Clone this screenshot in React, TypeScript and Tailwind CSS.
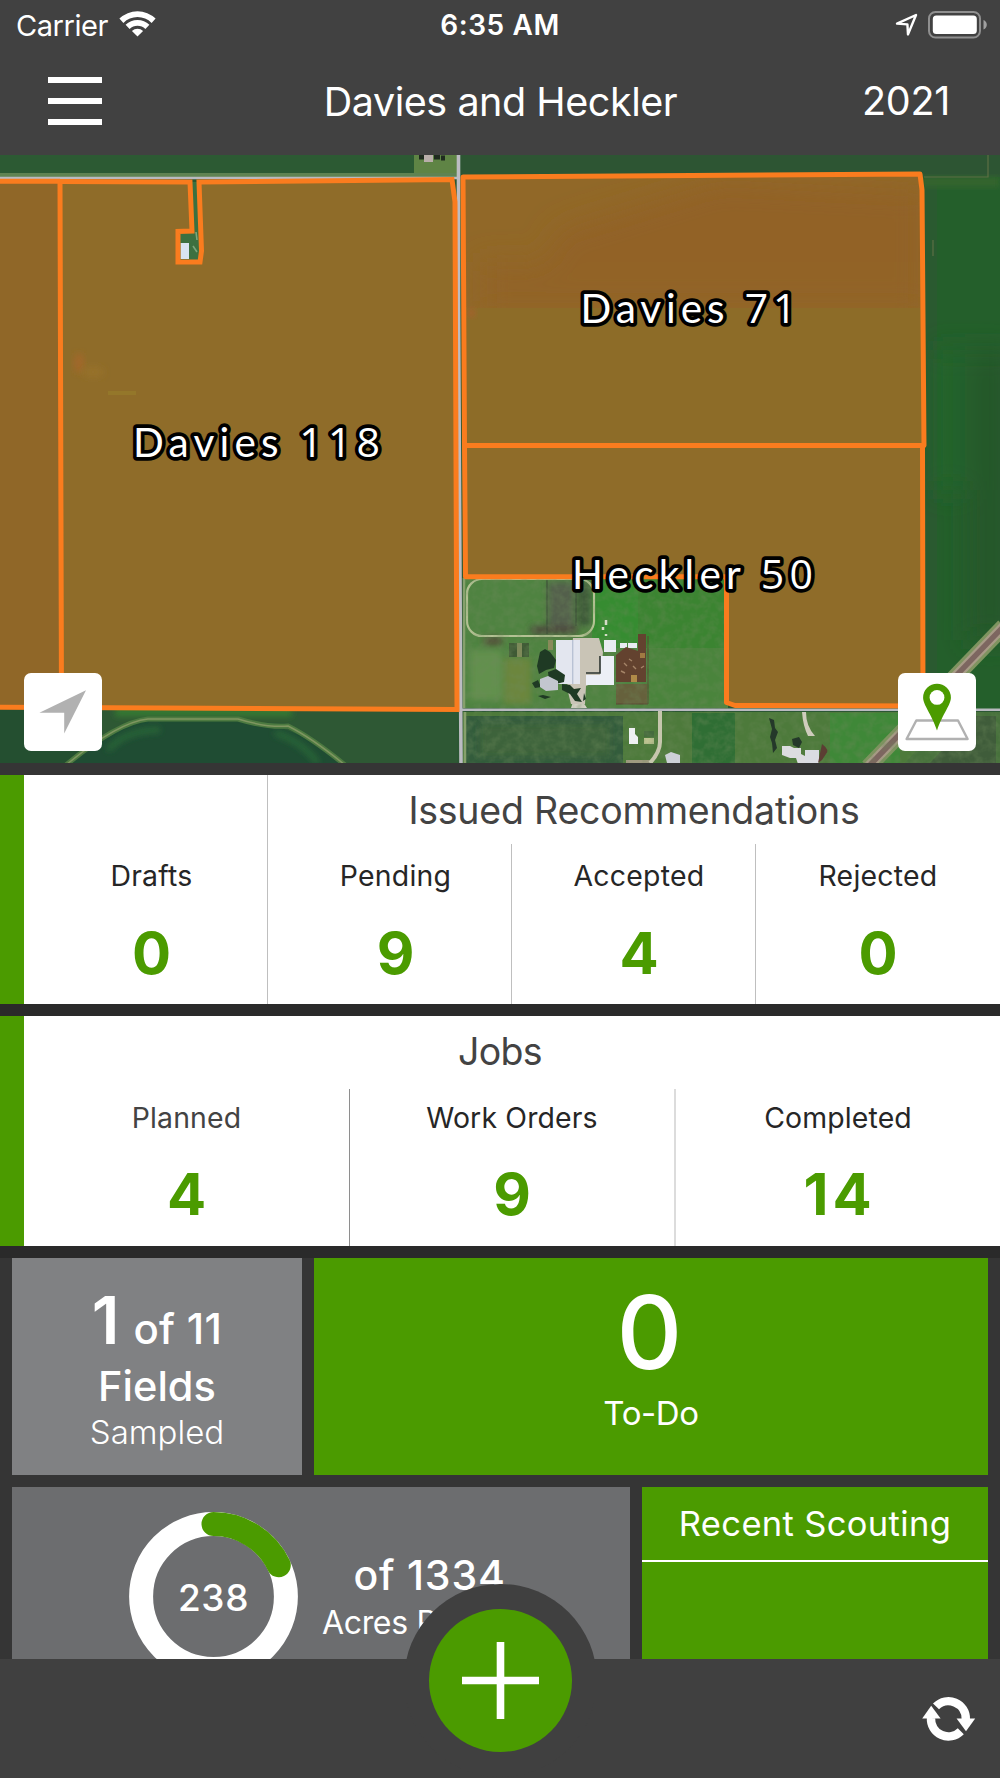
type StatProps = {
  label: string;
  value: number;
};

function Wifi() {
  return (
    <svg width="37" height="28" viewBox="0 0 37 28" fill="#fff">
      <path d="M0.4 9.6A26 26 0 0 1 36.6 9.6L32.6 13.9A20 20 0 0 0 4.4 13.9Z" />
      <path d="M6.6 15.8A17.2 17.2 0 0 1 30.4 15.8L26.4 19.9A11.5 11.5 0 0 0 10.6 19.9Z" />
      <path d="M12.9 22A8.2 8.2 0 0 1 24.1 22L18.5 27.4Z" />
    </svg>
  );
}

function StatusBar() {
  return (
    <div className="grid h-[51px] grid-cols-3 items-center pl-4 pr-[13px]">
      <div className="flex items-center gap-[11px]">
        <span className="text-[29px] tracking-[-0.44px] leading-[51px]">
          Carrier
        </span>
        <div className="pb-[5px]">
          <Wifi />
        </div>
      </div>
      <p className="text-center text-[28px] font-semibold tracking-[0.6px] leading-[51px] pr-[3px]">
        6:35 AM
      </p>
      <div className="flex items-center justify-end gap-[9px] pb-[2px]">
        <svg width="24" height="24" viewBox="0 0 24 24">
          <path
            d="M2 10.6 L21 2 L13 21.4 L12.4 11.4 Z"
            fill="none"
            stroke="#fff"
            strokeWidth="2.4"
            strokeLinejoin="round"
          />
        </svg>
        <svg width="59" height="28" viewBox="0 0 59 28">
          <rect x="1" y="1" width="51" height="25.5" rx="6.5" fill="none" stroke="#8f8f8f" strokeWidth="2" />
          <rect x="4.8" y="4.6" width="44" height="18.4" rx="3.5" fill="#fff" />
          <path d="M55.5 9 Q58.8 10.5 58.8 13.8 Q58.8 17 55.5 18.6 Z" fill="#a0a0a0" />
        </svg>
      </div>
    </div>
  );
}

function Header() {
  return (
    <header className="h-[155px] shrink-0 bg-[#414141] text-white">
      <StatusBar />
      <div className="grid h-[100px] grid-cols-[1fr_auto_1fr] items-center pl-12 pr-[50px]">
        <button className="flex w-[54px] flex-col gap-[14.5px]">
          <span className="h-[6.5px] bg-white" />
          <span className="h-[6.5px] bg-white" />
          <span className="h-[6.5px] bg-white" />
        </button>
        <h1 className="pt-1 pl-[3px] text-[39.5px] tracking-[-0.46px]">
          Davies and Heckler
        </h1>
        <p className="pt-[2px] text-right text-[39.5px] tracking-[-0.3px]">2021</p>
      </div>
    </header>
  );
}

function FieldLabel({
  x,
  y,
  width,
  name,
  acres,
}: {
  x: number;
  y: number;
  width: number;
  name: string;
  acres: string;
}) {
  return (
    <text
      x={x}
      y={y}
      textLength={width}
      fontSize="40.5"
      fontFamily="Lato, sans-serif"
      fill="#fff"
      stroke="#000"
      strokeWidth="7.5"
      strokeLinejoin="round"
      paintOrder="stroke"
      xmlSpace="preserve"
    >
      {name}{" "}
      <tspan fontFamily="'Open Sans', sans-serif" fontSize="41">
        {acres}
      </tspan>
    </text>
  );
}

function Satellite() {
  return (
    <g>
      <rect x="0" y="155" width="1000" height="608" fill="#2b5733" />

      {/* strip north of the road */}
      <rect x="0" y="155" width="458" height="20" fill="#2c5a33" />
      <rect x="414" y="155" width="43" height="20" fill="#5f8445" />
      <rect x="424" y="155" width="9" height="7" fill="#b9aeaa" />
      <path d="M419 157h5M434 157h6M441 158h4" stroke="#1f2b1f" strokeWidth="5" />
      <rect x="0" y="173" width="458" height="4" fill="#5f8352" />
      <rect x="461" y="155" width="539" height="20" fill="#2d5533" />

      {/* east field */}
      <rect x="920" y="177" width="80" height="533" fill="#245f2b" />
      <rect x="920" y="177" width="17" height="533" fill="#2a5a30" />
      <g filter="url(#haze)">
        <rect x="937" y="350" width="26" height="140" fill="#226529" />
        <rect x="970" y="350" width="40" height="290" fill="#265629" />
      </g>
      <rect x="920" y="177" width="80" height="10" fill="#35652f" filter="url(#soft)" />
      <path d="M924 177H988V155M933 240V256" fill="none" stroke="#5d6f44" strokeWidth="1.2" />

      {/* farmyard */}
      <rect x="463" y="577" width="265" height="131" fill="#4f8341" />
      <rect x="592" y="578" width="46" height="70" fill="#368c31" />
      <rect x="638" y="578" width="90" height="70" fill="#3b8431" />
      <rect x="647" y="648" width="81" height="58" fill="#4a843c" />
      <g filter="url(#soft)">
        <rect x="548" y="582" width="26" height="44" fill="#525f4b" />
        <rect x="577" y="582" width="14" height="44" fill="#3d5a38" />
        <rect x="531" y="626" width="46" height="8" fill="#4d4a3c" />
        <rect x="484" y="637" width="18" height="8" fill="#534b39" />
        <rect x="504" y="658" width="27" height="46" fill="#6c863e" />
        <rect x="470" y="650" width="32" height="50" fill="#62904d" />
      </g>
      <rect x="467" y="579" width="127" height="57" rx="15" fill="none" stroke="#b4c294" strokeWidth="2.2" />
      <path d="M547 580V634M576 580V626" stroke="#3a4a36" strokeWidth="1" />
      <rect x="509" y="643" width="20" height="14" fill="#3f5a35" />
      <rect x="517" y="643" width="5" height="14" fill="#7f8a5a" />
      <rect x="548" y="640" width="5" height="10" fill="#8a8a5a" />
      <rect x="616" y="684" width="31" height="20" fill="#66613c" />
      <path d="M648 636V704H616" fill="none" stroke="#5a4632" strokeWidth="1" />
      <path d="M571 708l2 -6h10l4 6z" fill="#d6d3c7" />

      {/* south of the road */}
      <rect x="463" y="712" width="537" height="51" fill="#4d7a3b" />
      <rect x="466" y="716" width="157" height="47" fill="#335c3c" />
      <rect x="480" y="724" width="130" height="32" fill="#3d633a" filter="url(#soft)" />
      <rect x="692" y="713" width="43" height="50" fill="#2f6e34" />
      <rect x="830" y="713" width="70" height="50" fill="#3f8838" />
      <rect x="644" y="731" width="10" height="6" fill="#456b3d" />
      <rect x="644" y="738" width="10" height="6" fill="#c3c795" />
      <rect x="626" y="760" width="24" height="3" fill="#a09a80" />

      {/* railway */}
      <path d="M868 767L1004 626" stroke="#7f9460" strokeWidth="16" />
      <path d="M868 767L1004 626" stroke="#a79b86" strokeWidth="10" />
      <path d="M868 767L1004 626" stroke="#7d6660" strokeWidth="5.5" />
      <path d="M905 763L952 712H1000V763Z" fill="#47713c" />
      <path d="M930 763L975 716H996V763Z" fill="#3f5c3a" />

      {/* creek in the south west */}
      <rect x="0" y="709" width="457" height="54" fill="#2e5834" />
      <rect x="0" y="709" width="90" height="54" fill="#244f30" />
      <path d="M70 763Q115 722 150 720H240Q290 722 345 763Z" fill="#1f4c33" />
      <g fill="none" filter="url(#soft)">
        <path d="M115 712H292" stroke="#367a32" strokeWidth="9" />
        <path d="M108 750Q125 730 160 730M275 733Q300 740 318 763" stroke="#2a6a38" strokeWidth="5" />
      </g>
      <path
        d="M66 765Q118 722 148 719H238Q268 728 288 726Q312 738 345 765"
        fill="none"
        stroke="#4d7a41"
        strokeWidth="5"
      />
      <path
        d="M66 765Q118 722 148 719H238Q268 728 288 726Q312 738 345 765"
        fill="none"
        stroke="#7f9660"
        strokeWidth="1.5"
      />
    </g>
  );
}

function Farmstead() {
  return (
    <g>
      <path d="M579 638h20l4 14 -3 28 -14 6 -1 18h-14l-4 -16 6 -50z" fill="#c9c4b6" />
      <rect x="556" y="640" width="24" height="44" fill="#e3e6ef" />
      <rect x="572" y="640" width="1.4" height="44" fill="#b9c2d4" />
      <path d="M600 656h14v29h-28v-10h14z" fill="#eceff6" />
      <path d="M600 656v17h-14" fill="none" stroke="#2c3430" strokeWidth="1.6" />
      <rect x="604" y="640" width="12" height="12" fill="#e8ecf2" />
      <rect x="620" y="643" width="7" height="5" fill="#e8ecf2" />
      <rect x="628" y="643" width="9" height="5" fill="#e8ecf2" />
      <path d="M616 655l10 -8 12 4V634h8v48h-30z" fill="#63422f" />
      <rect x="631" y="675" width="6" height="7" fill="#b08a48" />
      <rect x="640" y="653" width="5" height="5" fill="#a07a42" />
      <path
        d="M624 663l3 3M629 659l3 2M621 671l4 2M633 666l3 3M641 668l3 -2"
        stroke="#a58468"
        strokeWidth="1.4"
      />
      <g fill="#1f3a24">
        <path d="M540 652l5 -3 5 3 6 8 -2 8 -8 2 -7 4 -2 -8z" />
        <path d="M548 672l8 -3 9 6 -1 7 -8 2 -7 -3z" />
        <path d="M532 683l6 -3 3 7 -6 1zM562 684l8 1 4 4 7 -1 -4 6 5 8 -7 -1 -5 -7 -8 -4z" />
        <path d="M538 696l5 -1 8 2 -6 2zM584 693l2 6 -3 2z" />
      </g>
      <path d="M540 679l8 -3 10 5v9l-12 1 -6 -4z" fill="#c3c6cf" />
      <path d="M606 620v5M603 627v3M606 634v2" stroke="#d5dcc8" strokeWidth="2.5" />

      <path d="M660 711V742Q660 752 650 763" fill="none" stroke="#c6c6ad" strokeWidth="4" />
      <path d="M629 728h6v6l3 3v7h-9z" fill="#eef0f2" />
      <path d="M665 755l6 -3 9 3v8h-13z" fill="#ccd0d6" />
      <path d="M802 712q1 14 6 24h7q-9 -10 -9 -24z" fill="#cfccbc" />
      <path d="M782 746h8l4 2h7v6l4 2v8h-7l-2 -6h-6l-8 -3z" fill="#dcdce0" />
      <rect x="805" y="750" width="14" height="15" fill="#dadce2" />
      <path d="M822 744q8 6 4 10l-4 6 -4 3z" fill="#5c3d33" />
      <path
        d="M769 718l5 2 1 8 3 4 -3 8 2 8 -4 5 -1 -10 -2 -6 2 -8zM792 739l7 -2 3 5 -3 6 -6 -3z"
        fill="#24382a"
      />
    </g>
  );
}

function FieldMap() {
  return (
    <section className="relative h-[608px] shrink-0">
      <svg width="1000" height="608" viewBox="0 155 1000 608" className="block">
        <defs>
          <filter id="soft" x="-30%" y="-30%" width="160%" height="160%">
            <feGaussianBlur stdDeviation="3" />
          </filter>
          <filter id="haze" x="-50%" y="-50%" width="200%" height="200%">
            <feGaussianBlur stdDeviation="14" />
          </filter>
          <filter id="grain" x="0" y="0" width="100%" height="100%">
            <feTurbulence type="fractalNoise" baseFrequency="0.12" numOctaves="3" seed="4" />
            <feColorMatrix values="0 0 0 0 0.15  0 0 0 0 0.25  0 0 0 0 0.1  0 0.8 0 0 -0.3" />
          </filter>
          <clipPath id="davies71">
            <path d="M463 177L920 174L924 445H464Z" />
          </clipPath>
          <clipPath id="east">
            <rect x="920" y="177" width="80" height="533" />
          </clipPath>
        </defs>

        <Satellite />
        <rect x="463" y="577" width="265" height="186" filter="url(#grain)" />
        <rect x="728" y="712" width="272" height="51" filter="url(#grain)" />
        <Farmstead />

        {/* roads */}
        <path d="M0 178H458M461 709.7H1000" stroke="#b9bac0" strokeWidth="2.6" />
        <path d="M465 712V763M464 578V708" stroke="#86a06c" strokeWidth="2.5" />
        <path d="M458.5 155V300L461 763" fill="none" stroke="#bcbcc2" strokeWidth="3.6" />

        {/* field fills */}
        <path d="M0 181H60L61.5 707.5H0Z" fill="#906728" />
        <path
          d="M60 181.5L190 182L192 231L178 231.5V262H200L201.5 251L199 182L452 179.5L455 202L457 709.5L61.5 707.5Z"
          fill="#8f6c29"
        />
        <path d="M463 177L920 174L924 445H464Z" fill="#8d6c28" />
        <g clipPath="url(#davies71)">
          <rect x="460" y="170" width="470" height="138" fill="#916828" />
          <g filter="url(#haze)">
            <path d="M560 230L720 180L925 190V310H520Z" fill="#926228" />
            <path d="M480 262H920V310H480Z" fill="#926428" />
          </g>
          <rect x="460" y="308" width="470" height="140" fill="#8d6c28" />
          <circle cx="471" cy="313" r="4" fill="#a7602e" filter="url(#soft)" />
        </g>
        <path d="M465 445H922.5V706H735L726.5 702V576.7H465.5Z" fill="#8f6c29" />
        <ellipse cx="79" cy="363" rx="5" ry="10" fill="#a2682b" filter="url(#soft)" />
        <ellipse cx="93" cy="372" rx="11" ry="6" fill="#96712a" filter="url(#soft)" />
        <path d="M108 393H136" stroke="#94772a" strokeWidth="4" />

        {/* farm site cut out of the Davies 118 field */}
        <path d="M192 182H199L201 251L200 262H180V233L193 231Z" fill="#3c7040" />
        <rect x="180.5" y="243" width="8.5" height="16" fill="#d8e4f2" />
        <path d="M196 232l1 8M193 246l4 6" stroke="#7ba67c" strokeWidth="1.6" />

        {/* field boundaries */}
        <g fill="none" stroke="#fa7c1e" strokeWidth="5" strokeLinejoin="round">
          <path d="M-5 181.3H60M60 181L61.5 707.5L-5 707.3" />
          <path
            d="M60 181.5L190 182L192 231L178 231.5V262H200L201.5 251L199 182L452 179.5L455 202L457 709.5L61.5 707.5"
            strokeLinejoin="miter"
          />
          <path d="M463 177L920 174L922 190L924 445.5H464.5Z" />
          <path d="M464.5 445.5H922.5L923 706L735 705.5L726.5 702.5V576.7H465.5Z" />
        </g>

        <FieldLabel x={580.5} y={322.5} width={216} name="Davies" acres="71" />
        <FieldLabel x={133} y={457} width={247} name="Davies" acres="118" />
        <FieldLabel x={572} y={588.5} width={241} name="Heckler" acres="50" />
      </svg>

      <button className="absolute bottom-3 left-6 size-[78px] rounded-[7px] bg-white">
        <svg width="78" height="78" viewBox="24 673 78 78">
          <path d="M86 690.3L39.4 712.8H64.2V733.6Z" fill="#b1b1b1" />
        </svg>
      </button>
      <button className="absolute bottom-3 right-6 size-[78px] rounded-[7px] bg-white">
        <svg width="78" height="78" viewBox="898 673 78 78">
          <path
            d="M916.3 720.5H958L967.6 739H906.6Z"
            fill="none"
            stroke="#b1b1b1"
            strokeWidth="2.4"
            strokeLinejoin="round"
          />
          <path
            d="M937 683.7A13.9 13.9 0 0 1 950.9 697.6C950.9 705 943 713 937 730.5C931 713 923.1 705 923.1 697.6A13.9 13.9 0 0 1 937 683.7Z"
            fill="#4b9b00"
          />
          <circle cx="937" cy="697.4" r="7.4" fill="#fff" />
        </svg>
      </button>
    </section>
  );
}

function StatValue({ value, className }: { value: number; className: string }) {
  return (
    <p className={`text-[58px] font-bold text-[#4b9b00] ${className}`}>
      {value}
    </p>
  );
}

function Recommendation({ label, value }: StatProps) {
  return (
    <div className="flex-1 text-center">
      <p className="h-[63px] text-[28.4px] leading-[63px] tracking-[0.25px] text-[#262626]">
        {label}
      </p>
      <StatValue value={value} className="leading-[93px]" />
    </div>
  );
}

function Job({ label, value, muted }: StatProps & { muted?: boolean }) {
  return (
    <div className="flex-1 text-center">
      <p
        className={`h-[56px] text-[28.4px] leading-[57px] tracking-[0.15px] ${
          muted ? "text-[#434343]" : "text-[#262626]"
        }`}
      >
        {label}
      </p>
      <StatValue
        value={value}
        className={value > 9 ? "pl-[3px] leading-[99px] tracking-[4px]" : "leading-[99px]"}
      />
    </div>
  );
}

function Recommendations() {
  return (
    <section className="mt-3 flex h-[229px] shrink-0 border-l-[24px] border-[#4b9b00] bg-white">
      <div className="flex w-[244px] border-r border-[#bfbfbf] pt-[69px] pl-3">
        <Recommendation label="Drafts" value={0} />
      </div>
      <div className="flex-1">
        <h2 className="h-[69px] text-center text-[37.5px] leading-[71px] tracking-[-0.22px] text-[#434343]">
          Issued Recommendations
        </h2>
        <div className="flex h-[160px]">
          <div className="flex w-[244px] border-r border-[#bfbfbf] pl-3">
            <Recommendation label="Pending" value={9} />
          </div>
          <div className="flex w-[244px] border-r border-[#bfbfbf] pl-[11px]">
            <Recommendation label="Accepted" value={4} />
          </div>
          <Recommendation label="Rejected" value={0} />
        </div>
      </div>
    </section>
  );
}

function Jobs() {
  return (
    <section className="h-[230px] shrink-0 border-l-[24px] border-[#4b9b00] bg-white">
      <h2 className="h-[73px] pr-6 text-center text-[37.5px] leading-[72px] tracking-[-0.7px] text-[#434343]">
        Jobs
      </h2>
      <div className="flex h-[157px]">
        <div className="flex w-[326px] border-r border-[#8e8e8e]">
          <Job label="Planned" value={4} muted />
        </div>
        <div className="flex w-[326px] border-r-2 border-[#dcdcdc]">
          <Job label="Work Orders" value={9} />
        </div>
        <Job label="Completed" value={14} />
      </div>
    </section>
  );
}

function AcresRing({ done, total }: { done: number; total: number }) {
  const circumference = 2 * Math.PI * 72.4;

  return (
    <div className="relative mt-[25px] size-[169px]">
      <svg width="169" height="169" viewBox="0 0 169 169" fill="none">
        <circle cx="84.5" cy="84.5" r="72.4" stroke="#fff" strokeWidth="24" />
        <circle
          cx="84.5"
          cy="84.5"
          r="72.4"
          stroke="#4b9b00"
          strokeWidth="24"
          strokeLinecap="round"
          strokeDasharray={`${(circumference * done) / total} ${circumference}`}
          transform="rotate(-90 84.5 84.5)"
        />
      </svg>
      <span className="absolute inset-0 pt-px text-center text-[37px] leading-[169px] font-medium tracking-[0.6px]">
        {done}
      </span>
    </div>
  );
}

function Tiles() {
  return (
    <section className="flex min-h-0 flex-1 flex-col gap-3 overflow-hidden bg-[#353535] px-3 text-white">
      <div className="flex h-[217px] shrink-0 gap-3">
        <div className="w-[290px] bg-[#808183] pt-[26px] text-center">
          <div className="flex items-baseline justify-center gap-[14px] font-medium">
            <span className="text-[65.6px] leading-[72px] font-semibold">1</span>
            <span className="text-[42px] leading-none tracking-[0.3px]">of 11</span>
          </div>
          <p className="text-[41.5px] leading-[60px] font-medium">Fields</p>
          <p className="text-[33px] leading-[32px] font-light">Sampled</p>
        </div>
        <div className="flex-1 bg-[#4b9b00] pt-5 text-center">
          <p className="text-[102px] leading-[109px] font-medium pr-[3px]">0</p>
          <p className="text-[33px] leading-[53px] tracking-[-0.38px]">To-Do</p>
        </div>
      </div>

      <div className="flex h-[217px] shrink-0 gap-3">
        <div className="flex w-[618px] bg-[#6c6d6f] pl-[117px]">
          <AcresRing done={238} total={1334} />
          <div className="ml-6 w-[213px] whitespace-nowrap pt-16 text-center">
            <p className="pl-[2px] text-[41px] leading-[48px] font-medium tracking-[0.8px]">
              of 1334
            </p>
            <p className="text-[32px] leading-[47px] tracking-[-0.34px]">
              Acres Planned
            </p>
          </div>
        </div>
        <div className="flex-1 bg-[#4b9b00]">
          <h2 className="h-[75px] border-b-2 border-white text-center text-[34.5px] leading-[73px] tracking-[0.35px]">
            Recent Scouting
          </h2>
        </div>
      </div>
    </section>
  );
}

function BottomBar() {
  return (
    <nav className="relative flex h-[119px] shrink-0 items-center justify-end bg-[#404040] pr-[24px]">
      <button className="absolute top-[-75px] left-[404px] flex size-[193px] items-center justify-center rounded-full bg-[#404040]">
        <span className="flex size-[143px] items-center justify-center rounded-full bg-[#4b9b00]">
          <svg width="77" height="77" viewBox="0 0 77 77">
            <path d="M0 38.5H77M38.5 0V77" stroke="#fff" strokeWidth="7.6" />
          </svg>
        </span>
      </button>
      <svg width="54" height="46" viewBox="0 0 54 46">
        <g fill="none" stroke="#fff" strokeWidth="8.4">
          <path d="M14 10.4A17.4 17.4 0 0 1 43.8 23" />
          <path d="M38.8 35.2A17.4 17.4 0 0 1 9 22" />
        </g>
        <path d="M34.6 22.6H53.2L44 35.2Z" fill="#fff" />
        <path d="M0.2 22.4H18.6L9.2 9.8Z" fill="#fff" />
      </svg>
    </nav>
  );
}

export default function App() {
  return (
    <div className="flex h-[1778px] w-[1000px] flex-col overflow-hidden bg-[#353535] font-[Inter,sans-serif]">
      <Header />
      <FieldMap />
      <Recommendations />
      <div className="h-3 shrink-0 bg-[#2a2a2a]" />
      <Jobs />
      <div className="h-3 shrink-0 bg-[#2a2a2a]" />
      <Tiles />
      <BottomBar />
    </div>
  );
}
